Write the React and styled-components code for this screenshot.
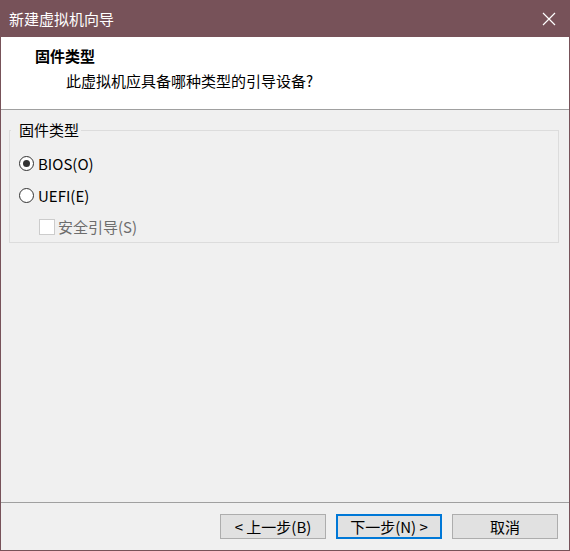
import React from "react";
import styled, { createGlobalStyle } from "styled-components";

const Global = createGlobalStyle`
  html, body { margin: 0; padding: 0; background: #f0f0f0; }
  * { box-sizing: border-box; }
  body { font-family: "Noto Sans CJK SC", "Microsoft YaHei", sans-serif; }
`;

const Window = styled.div`
  width: 570px;
  height: 551px;
  display: flex;
  flex-direction: column;
  border: 1px solid #775259;
  border-top: none;
  background: #f0f0f0;
  font-size: 15px;
  color: #000;
`;

const TitleBar = styled.div`
  height: 37px;
  flex: none;
  margin: 0 -1px;
  background: #775259;
  display: flex;
  align-items: center;
  justify-content: space-between;
  padding: 0 14px 0 9px;
  color: #fff;
  font-size: 15px;
`;

const TitleText = styled.span`
  line-height: 1;
  margin-top: -1px;
`;

const CloseIcon = styled.svg`
  width: 14px;
  height: 14px;
  margin-top: 1px;
`;

const Header = styled.div`
  flex: none;
  height: 73px;
  background: #fff;
  border-bottom: 1px solid #a0a0a0;
  padding: 9px 0 0 34px;
  display: flex;
  flex-direction: column;
`;

const HeaderTitle = styled.div`
  font-weight: bold;
  line-height: 20px;
`;

const HeaderSub = styled.div`
  line-height: 20px;
  margin-top: 5px;
  padding-left: 31px;
`;

const Body = styled.div`
  flex: 1;
  padding: 10px 10px 0 8px;
`;

const Group = styled.fieldset`
  margin: 0;
  padding: 7px 0 0 9px;
  border: 1px solid #dcdcdc;
  display: flex;
  flex-direction: column;
`;

const Legend = styled.legend`
  padding: 0 2px 0 8px;
  margin-left: -8px;
  line-height: 20px;
  font-size: 15px;
`;

const Option = styled.label`
  display: flex;
  align-items: center;
  height: ${(p) => p.$h || 32}px;
  padding-left: ${(p) => p.$indent || 0}px;
  color: ${(p) => (p.$disabled ? "#6d6d6d" : "#000")};
  gap: ${(p) => p.$gap || 4}px;
`;

const RadioCircle = styled.span`
  width: 15px;
  height: 15px;
  border-radius: 50%;
  border: 1px solid #333;
  background: #fff;
  display: flex;
  align-items: center;
  justify-content: center;
  flex: none;
  &::after {
    content: "";
    width: 7px;
    height: 7px;
    border-radius: 50%;
    background: ${(p) => (p.$checked ? "#333" : "transparent")};
  }
`;

const CheckBox = styled.span`
  width: 16px;
  height: 16px;
  border: 1px solid #cccccc;
  background: #fff;
  flex: none;
`;

const Footer = styled.div`
  flex: none;
  height: 48px;
  border-top: 1px solid #a0a0a0;
  display: flex;
  justify-content: flex-end;
  align-items: flex-start;
  padding: 11px 11px 0 0;
  gap: 10px;
`;

const Button = styled.button`
  width: 106px;
  height: 25px;
  font-family: inherit;
  font-size: 15px;
  line-height: 1;
  background: #e1e1e1;
  border: ${(p) => (p.$default ? "2px solid #0078d7" : "1px solid #adadad")};
  color: #000;
  padding: 0;
  display: flex;
  align-items: center;
  justify-content: center;
`;

export default function App() {
  return (
    <>
      <Global />
      <Window>
        <TitleBar>
          <TitleText>新建虚拟机向导</TitleText>
          <CloseIcon viewBox="0 0 14 14">
            <path d="M1 1 L13 13 M13 1 L1 13" stroke="#fff" strokeWidth="1.2" />
          </CloseIcon>
        </TitleBar>
        <Header>
          <HeaderTitle>固件类型</HeaderTitle>
          <HeaderSub>此虚拟机应具备哪种类型的引导设备?</HeaderSub>
        </Header>
        <Body>
          <Group>
            <Legend>固件类型</Legend>
            <Option $gap={4}>
              <RadioCircle $checked />
              <span>BIOS(O)</span>
            </Option>
            <Option $gap={4}>
              <RadioCircle />
              <span>UEFI(E)</span>
            </Option>
            <Option $indent={20} $disabled $h={31} $gap={3}>
              <CheckBox />
              <span>安全引导(S)</span>
            </Option>
          </Group>
        </Body>
        <Footer>
          <Button>&lt; 上一步(B)</Button>
          <Button $default>下一步(N) &gt;</Button>
          <Button>取消</Button>
        </Footer>
      </Window>
    </>
  );
}
